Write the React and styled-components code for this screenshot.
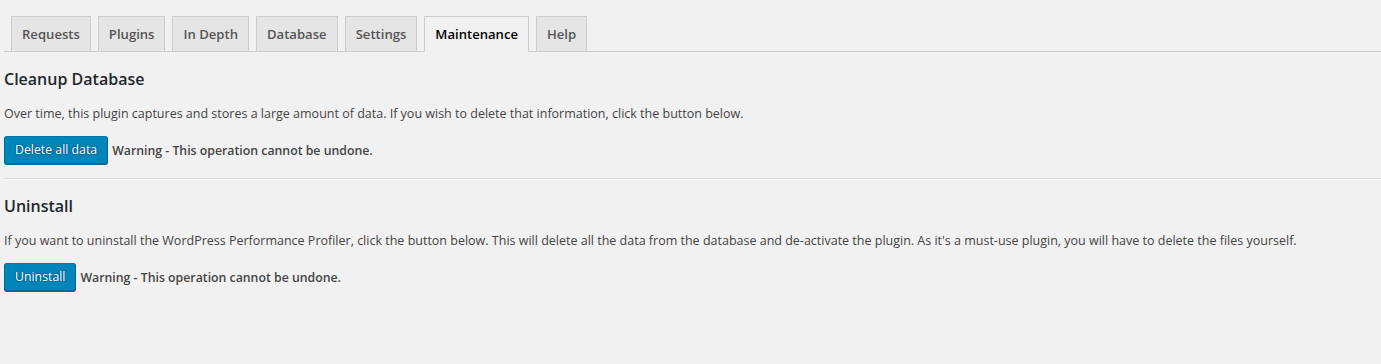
import React from "react";
import styled, { createGlobalStyle } from "styled-components";

const Global = createGlobalStyle`
  html, body { margin: 0; padding: 0; background: #f1f1f1; }
  body {
    font-family: "Open Sans", "Noto Sans", "Liberation Sans", sans-serif;
    font-size: 12.5px;
    color: #444;
  }
`;

const Wrap = styled.div`
  padding: 0 0 40px 4px;
`;

const TabBar = styled.nav`
  display: flex;
  align-items: flex-end;
  padding-top: 16px;
  border-bottom: 1px solid #ccc;
`;

const Tab = styled.a`
  display: block;
  margin-left: 7px;
  padding: 5px 10px;
  font-size: 13.1px;
  line-height: 24px;
  font-weight: 600;
  text-decoration: none;
  border: 1px solid #ccc;
  border-bottom: ${(p) => (p.$active ? "1px solid #f1f1f1" : "none")};
  margin-bottom: ${(p) => (p.$active ? "-1px" : "0")};
  background: ${(p) => (p.$active ? "#f1f1f1" : "#e5e5e5")};
  color: ${(p) => (p.$active ? "#000" : "#555")};
  cursor: pointer;
`;

const Section = styled.section`
  padding-top: ${(p) => p.$top};
`;

const Heading = styled.h2`
  margin: 0;
  font-size: 16px;
  line-height: 20px;
  font-weight: 600;
  color: #23282d;
`;

const Text = styled.p`
  margin: 15px 0 0;
  font-size: 12.5px;
  line-height: 20px;
  color: #444;
`;

const Actions = styled.div`
  display: flex;
  align-items: center;
  gap: 4px;
  margin-top: 12px;
`;

const Button = styled.button`
  height: 28px;
  padding: 0 10px 1px;
  font-family: inherit;
  font-size: 12.3px;
  line-height: 26px;
  color: #fff;
  background: #0085ba;
  border: 1px solid;
  border-color: #0073aa #006799 #006799;
  border-radius: 3px;
  box-shadow: 0 1px 0 #006799;
  text-shadow: 0 -1px 1px #006799, 1px 0 1px #006799, 0 1px 1px #006799, -1px 0 1px #006799;
  cursor: pointer;
`;

const Warning = styled.strong`
  font-size: 12.3px;
  font-weight: 600;
  color: #444;
`;

const Rule = styled.hr`
  margin: 14px 0 0;
  border: 0;
  border-top: 1px solid #ddd;
  border-bottom: 1px solid #fafafa;
  height: 0;
`;

const tabs = ["Requests", "Plugins", "In Depth", "Database", "Settings", "Maintenance", "Help"];

export default function App() {
  return (
    <>
      <Global />
      <Wrap>
        <TabBar>
          {tabs.map((t) => (
            <Tab key={t} $active={t === "Maintenance"}>
              {t}
            </Tab>
          ))}
        </TabBar>
        <Section $top="17px">
          <Heading>Cleanup Database</Heading>
          <Text>
            Over time, this plugin captures and stores a large amount of data. If you wish to delete that
            information, click the button below.
          </Text>
          <Actions>
            <Button>Delete all data</Button>
            <Warning>Warning - This operation cannot be undone.</Warning>
          </Actions>
        </Section>
        <Rule />
        <Section $top="16px">
          <Heading>Uninstall</Heading>
          <Text>
            If you want to uninstall the WordPress Performance Profiler, click the button below. This will delete
            all the data from the database and de-activate the plugin. As it's a must-use plugin, you will have to
            delete the files yourself.
          </Text>
          <Actions>
            <Button>Uninstall</Button>
            <Warning>Warning - This operation cannot be undone.</Warning>
          </Actions>
        </Section>
      </Wrap>
    </>
  );
}
